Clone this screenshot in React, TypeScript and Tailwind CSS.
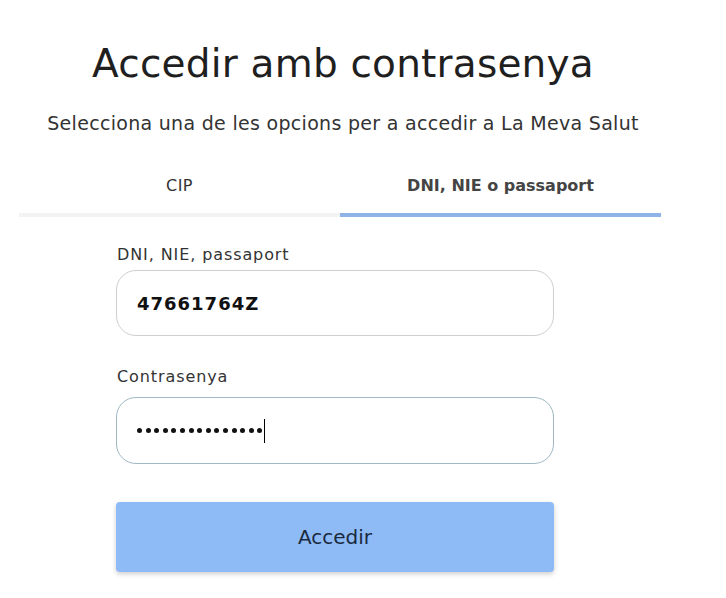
export default function App() {
  return (
    <div className="min-h-[598px] bg-white text-[#222]" style={{ fontFamily: '"DejaVu Sans", "Noto Sans", sans-serif' }}>
      <div className="ml-[19px] w-[642px] pt-[38px]">
        <h1 className="pl-[6px] text-center text-[39px] leading-[52px] font-normal tracking-[0.2px] text-[#1f1f1f]">Accedir amb contrasenya</h1>
        <p className="mt-[20px] pl-[6px] text-center text-[19px] leading-[26px] tracking-[0.3px] text-[#333]">
          Selecciona una de les opcions per a accedir a La Meva Salut
        </p>

        <div className="mt-[38px] grid grid-cols-2">
          <button className="flex flex-col items-center">
            <span className="text-[16px] leading-[24px] tracking-[0.5px] text-[#333]">CIP</span>
            <span className="mt-[15px] block h-[4px] w-full bg-[#f3f3f3]" />
          </button>
          <button className="flex flex-col items-center">
            <span className="text-[16px] leading-[24px] text-[#444] font-bold">DNI, NIE o passaport</span>
            <span className="mt-[15px] block h-[4px] w-full bg-[#8fb3e6]" />
          </button>
        </div>

        <form className="ml-[97px] mt-[27px] w-[438px]">
          <label className="block">
            <span className="block pl-[1px] text-[16px] leading-[22px] tracking-[0.9px] text-[#333]">DNI, NIE, passaport</span>
            <div className="mt-[4px] flex h-[66px] items-center rounded-[20px] border border-[#cfcfcf] px-[20px]">
              <span className="text-[18px] font-bold tracking-[1px] text-[#111]">47661764Z</span>
            </div>
          </label>

          <label className="mt-[30px] block">
            <span className="block pl-[1px] text-[16px] leading-[22px] tracking-[0.9px] text-[#333]">Contrasenya</span>
            <div className="mt-[9px] flex h-[67px] items-center rounded-[20px] border border-[#9fb8c4] px-[20px]">
              <span className="flex items-center gap-[3.6px]">
                {Array.from({ length: 15 }).map((_, i) => (
                  <span key={i} className="block h-[5px] w-[5px] rounded-full bg-[#111]" />
                ))}
              </span>
              <span className="ml-[2px] block h-[24px] w-[1px] bg-black" />
            </div>
          </label>

          <button
            type="button"
            className="mt-[38px] flex h-[70px] w-full items-center justify-center rounded-[4px] bg-[#8ebaf6] text-[20px] text-[#1a2a3f] shadow-[0_2px_5px_rgba(0,0,0,0.2)]"
          >
            Accedir
          </button>
        </form>
      </div>
    </div>
  );
}
